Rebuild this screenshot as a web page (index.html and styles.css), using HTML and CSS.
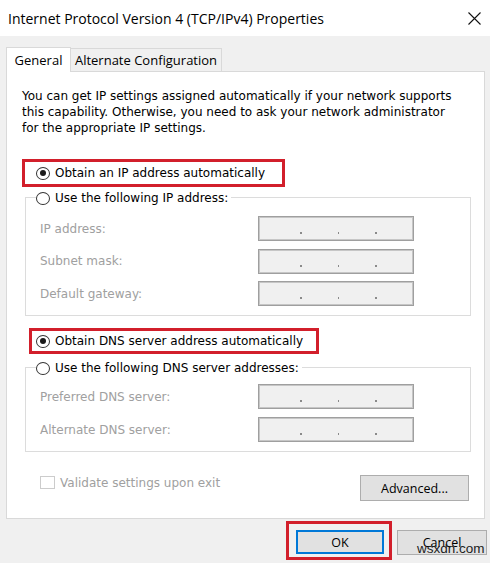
FILE: index.html
```html
<!DOCTYPE html>
<html>
<head>
<meta charset="utf-8">
<link rel="stylesheet" href="styles.css">
</head>
<body>
<div class="titlebar">
  <span class="title">Internet Protocol Version 4 (TCP/IPv4) Properties</span>
  <svg class="close" width="13" height="13" viewBox="0 0 13 13"><path d="M0.5 0.5L12.5 12.5M12.5 0.5L0.5 12.5" stroke="#111" stroke-width="1.1" fill="none"/></svg>
</div>
<div class="tabs">
  <div class="tab active">General</div>
  <div class="tab alt">Alternate Configuration</div>
</div>
<div class="panel">
  <p class="intro">You can get IP settings assigned automatically if your network supports<br>this capability. Otherwise, you need to ask your network administrator<br>for the appropriate IP settings.</p>
  <div class="mark mark-ip"><span class="radio checked"></span>Obtain an IP address automatically</div>
  <div class="group ipgroup">
    <div class="legend"><span class="radio"></span>Use the following IP address:</div>
    <div class="fields">
      <span class="lbl">IP address:</span><div class="ipbox"><i></i><i></i><i></i></div>
      <span class="lbl">Subnet mask:</span><div class="ipbox"><i></i><i></i><i></i></div>
      <span class="lbl">Default gateway:</span><div class="ipbox"><i></i><i></i><i></i></div>
    </div>
  </div>
  <div class="mark mark-dns"><span class="radio checked"></span>Obtain DNS server address automatically</div>
  <div class="group dnsgroup">
    <div class="legend"><span class="radio"></span>Use the following DNS server addresses:</div>
    <div class="fields">
      <span class="lbl">Preferred DNS server:</span><div class="ipbox"><i></i><i></i><i></i></div>
      <span class="lbl">Alternate DNS server:</span><div class="ipbox"><i></i><i></i><i></i></div>
    </div>
  </div>
  <div class="checkrow">
    <div class="check"><span class="box"></span>Validate settings upon exit</div>
    <div class="btn adv">Advanced...</div>
  </div>
</div>
<div class="footer">
  <div class="okmark"><div class="btn ok">OK</div></div>
  <div class="btn cancel">Cancel</div>
</div>
<div class="watermark">wsxdn.com</div>
</body>
</html>
```
FILE: styles.css
```css
html, body {
  margin: 0;
  padding: 0;
}
body {
  width: 490px;
  height: 563px;
  overflow: hidden;
  position: relative;
  background: #f0f0f0;
  font-family: "DejaVu Sans", sans-serif;
  font-size: 12px;
  color: #000;
}
.titlebar {
  height: 36px;
  background: #fff;
  display: flex;
  align-items: center;
  justify-content: space-between;
  padding: 0 9px 0 8px;
}
.title {
  font-family: "Open Sans", sans-serif;
  font-size: 14px;
  color: #000;
}
.close {
  display: block;
}
.tabs {
  display: flex;
  align-items: flex-end;
  height: 35px;
  padding-left: 6px;
  position: relative;
  z-index: 1;
}
.tab {
  font-family: "Open Sans", sans-serif;
  font-size: 13px;
  box-sizing: border-box;
  border: 1px solid #d9d9d9;
  border-bottom: none;
  display: flex;
  align-items: center;
  justify-content: center;
  height: 23px;
  background: #f0f0f0;
}
.tab.active {
  width: 65px;
  height: 25px;
  background: #fff;
  margin-bottom: -1px;
  padding-bottom: 1px;
}
.tab.alt {
  width: 151px;
  border-left: none;
}
.panel {
  margin-left: 6px;
  width: 479px;
  height: 448px;
  box-sizing: border-box;
  background: #fff;
  border: 1px solid #d9d9d9;
  overflow: hidden;
}
.intro {
  margin: 16px 0 0 15px;
  line-height: 16px;
}
.mark {
  box-sizing: border-box;
  border: 3px solid #d21f2b;
  display: flex;
  align-items: center;
}
.mark-ip {
  margin: 23px 0 0 15px;
  width: 263px;
  height: 28px;
  padding-left: 11px;
}
.mark-dns {
  margin: 12px 0 0 22px;
  width: 290px;
  height: 26px;
  padding-left: 4px;
}
.radio {
  flex: none;
  width: 14px;
  height: 13px;
  box-sizing: border-box;
  border: 1px solid #333;
  border-radius: 50%;
  background: #fff;
  margin-right: 5px;
  display: flex;
  align-items: center;
  justify-content: center;
}
.radio.checked::after {
  content: "";
  width: 6px;
  height: 6px;
  border-radius: 50%;
  background: #1a1a1a;
}
.group {
  margin: 10px 0 0 18px;
  width: 446px;
  box-sizing: border-box;
  border: 1px solid #dcdcdc;
  padding: 0 0 9px 14px;
}
.legend {
  display: flex;
  align-items: center;
  height: 16px;
  width: max-content;
  margin: -8px 0 0 -4px;
  padding-right: 3px;
  background: #fff;
}
.fields {
  display: grid;
  grid-template-columns: 218px 156px;
  align-items: center;
  row-gap: 7.5px;
  margin-top: 10px;
}
.dnsgroup {
  margin-top: 13px;
}
.dnsgroup .fields {
  row-gap: 8px;
  margin-top: 8px;
}
.lbl {
  color: #a0a0a0;
}
.ipbox {
  height: 25px;
  box-sizing: border-box;
  border: 1px solid #9f9f9f;
  box-shadow: inset 0 0 0 1px #c6c6c6;
  background: #f0f0f0;
  display: flex;
  padding: 15px 0 0 41px;
}
.ipbox i {
  width: 2px;
  height: 2px;
  background: #8a8a8a;
  margin-right: 36px;
}
.checkrow {
  display: flex;
  justify-content: space-between;
  align-items: flex-start;
  margin: 23px 15px 0 33px;
}
.check {
  display: flex;
  align-items: center;
  color: #a0a0a0;
  margin-top: 1px;
  height: 13px;
}
.box {
  width: 15px;
  height: 13px;
  box-sizing: border-box;
  border: 1px solid #cccccc;
  margin-right: 5px;
}
.btn {
  font-family: "Open Sans", sans-serif;
  font-size: 12.5px;
  color: #000;
  background: #e1e1e1;
  border: 1px solid #adadad;
  box-sizing: border-box;
  display: flex;
  align-items: center;
  justify-content: center;
}
.adv {
  width: 109px;
  height: 26px;
}
.footer {
  display: flex;
  align-items: flex-start;
  margin: 2px 0 0 286px;
}
.okmark {
  border: 3px solid #d21f2b;
  padding: 6px 5px 3px 7px;
}
.ok {
  width: 88px;
  height: 24px;
  border: 2px solid #0078d7;
}
.cancel {
  width: 90px;
  height: 25px;
  margin: 9px 0 0 5px;
}
.watermark {
  position: absolute;
  left: 417px;
  top: 541px;
  font-family: "Liberation Sans", sans-serif;
  font-size: 13.5px;
  line-height: 16px;
  color: #222;
}
```
